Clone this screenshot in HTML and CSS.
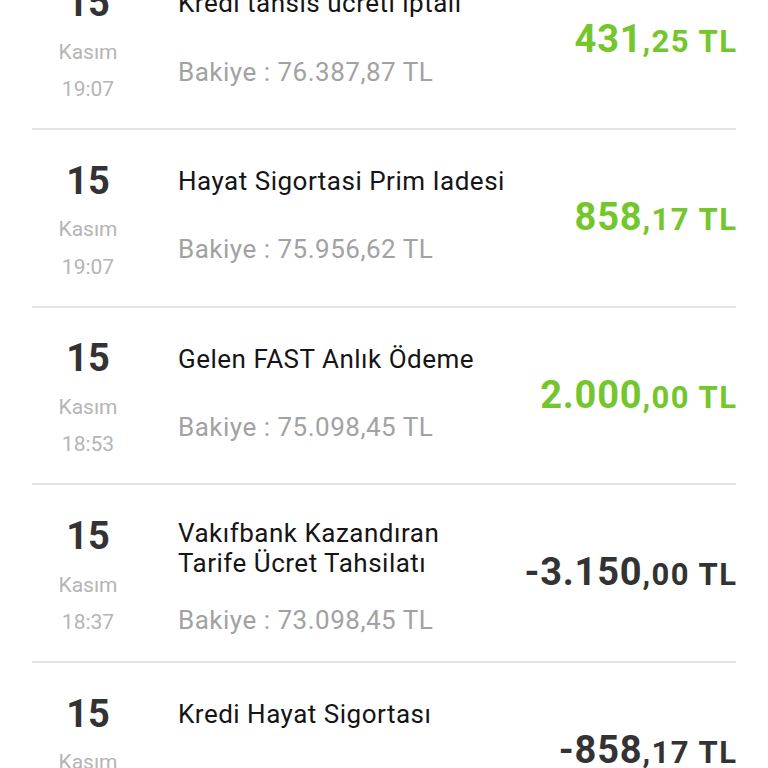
FILE: index.html
```html
<!DOCTYPE html>
<html lang="tr">
<head>
<meta charset="utf-8">
<title>Hesap Hareketleri</title>
<link rel="stylesheet" href="styles.css">
</head>
<body>
<div class="list">
  <div class="row">
    <div class="date"><div class="day">15</div><div class="month">Kasım</div><div class="time">19:07</div></div>
    <div class="info"><div class="title">Kredi tahsis ücreti iptali</div><div class="balance">Bakiye : 76.387,87 TL</div></div>
    <div class="amount credit"><span class="int">431</span><span class="dec">,25 TL</span></div>
  </div>
  <div class="row">
    <div class="date"><div class="day">15</div><div class="month">Kasım</div><div class="time">19:07</div></div>
    <div class="info"><div class="title">Hayat Sigortasi Prim Iadesi</div><div class="balance">Bakiye : 75.956,62 TL</div></div>
    <div class="amount credit"><span class="int">858</span><span class="dec">,17 TL</span></div>
  </div>
  <div class="row">
    <div class="date"><div class="day">15</div><div class="month">Kasım</div><div class="time">18:53</div></div>
    <div class="info"><div class="title">Gelen FAST Anlık Ödeme</div><div class="balance">Bakiye : 75.098,45 TL</div></div>
    <div class="amount credit"><span class="int">2.000</span><span class="dec">,00 TL</span></div>
  </div>
  <div class="row">
    <div class="date"><div class="day">15</div><div class="month">Kasım</div><div class="time">18:37</div></div>
    <div class="info two-line"><div class="title">Vakıfbank Kazandıran<br>Tarife Ücret Tahsilatı</div><div class="balance">Bakiye : 73.098,45 TL</div></div>
    <div class="amount debit"><span class="int">-3.150</span><span class="dec">,00 TL</span></div>
  </div>
  <div class="row">
    <div class="date"><div class="day">15</div><div class="month">Kasım</div><div class="time">18:37</div></div>
    <div class="info"><div class="title">Kredi Hayat Sigortası</div><div class="balance">Bakiye : 72.240,28 TL</div></div>
    <div class="amount debit"><span class="int">-858</span><span class="dec">,17 TL</span></div>
  </div>
</div>
</body>
</html>
```
FILE: styles.css
```css
html, body {
  margin: 0;
  padding: 0;
  background: #ffffff;
}
body {
  height: 768px;
  overflow: hidden;
  font-family: Roboto, "Noto Sans", "Liberation Sans", sans-serif;
}
.list {
  margin-top: -47.7px;
  padding: 0 32px;
}
.row {
  display: flex;
  height: 177.7px;
  box-sizing: border-box;
  border-bottom: 2px solid #e4e4e4;
}
.date {
  width: 112px;
  flex: none;
  display: flex;
  flex-direction: column;
  align-items: center;
  padding-top: 31.5px;
}
.day {
  font-size: 38px;
  line-height: 38px;
  font-weight: 700;
  color: #333333;
}
.month {
  margin-top: 16.8px;
  font-size: 21px;
  line-height: 26px;
  color: #b5b5b5;
}
.time {
  margin-top: 11.5px;
  font-size: 21px;
  line-height: 26px;
  color: #b5b5b5;
}
.info {
  margin-left: 34px;
  display: flex;
  flex-direction: column;
  padding-top: 36.1px;
}
.title {
  font-size: 26px;
  line-height: 30px;
  letter-spacing: 0.5px;
  color: #151515;
  white-space: nowrap;
}
.balance {
  margin-top: 38.3px;
  font-size: 26px;
  line-height: 30px;
  letter-spacing: 0.5px;
  color: #a2a2a2;
  white-space: nowrap;
}
.info.two-line {
  padding-top: 32.8px;
}
.info.two-line .balance {
  margin-top: 26.6px;
}
.amount {
  margin-left: auto;
  align-self: center;
  padding-top: 6px;
  font-weight: 700;
  white-space: nowrap;
  line-height: 38px;
}
.amount .int {
  font-size: 38px;
  letter-spacing: 0.8px;
}
.amount .dec {
  font-size: 31px;
  letter-spacing: 1.5px;
  margin-right: -1.5px;
}
.credit {
  color: #73c62c;
}
.debit {
  color: #333333;
}
```
